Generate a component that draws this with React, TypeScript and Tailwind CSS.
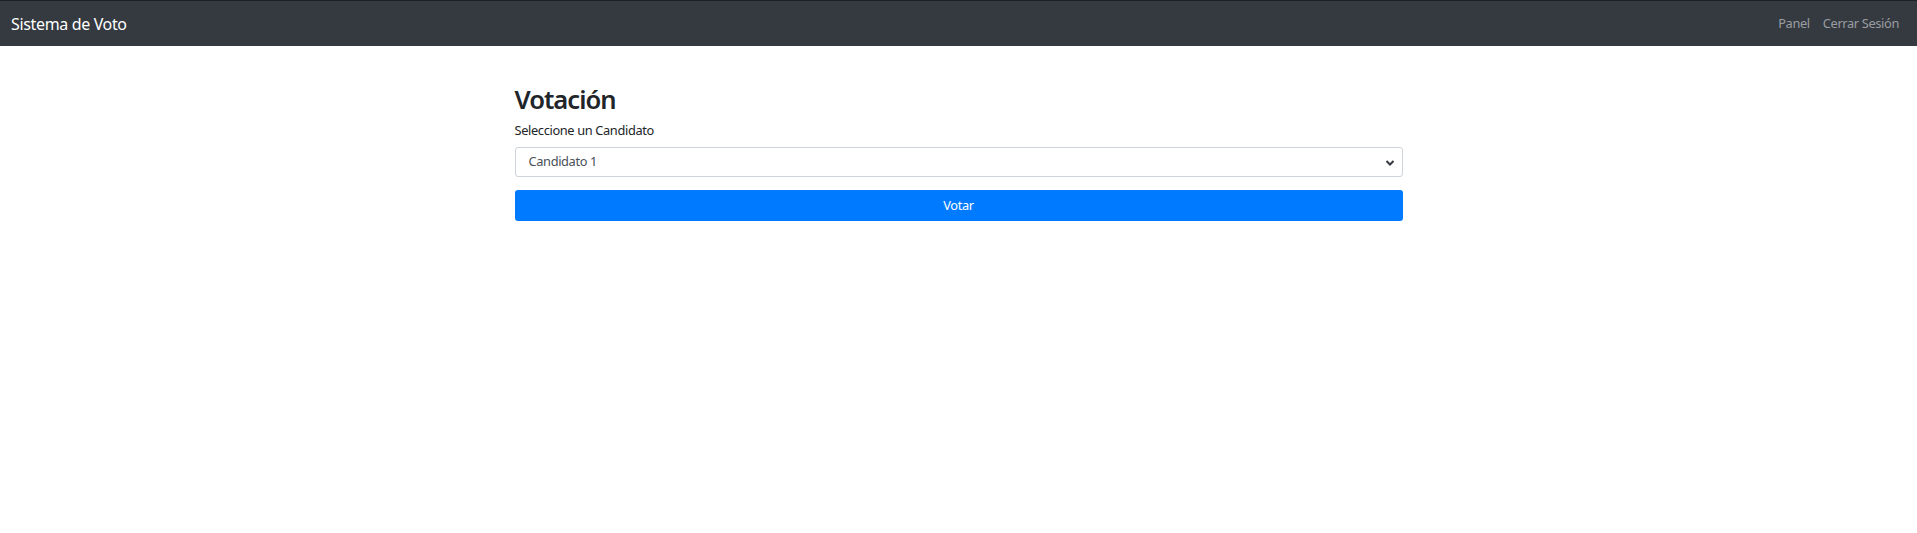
import React from "react";

const font = { fontFamily: '"Noto Sans", "Open Sans", Arial, sans-serif' };

export default function App() {
  return (
    <div className="min-h-screen bg-white text-[#212529] tracking-[-0.35px]" style={font}>
      <nav className="h-[46px] bg-[#343a40] border-t border-[#1e2124] flex items-center justify-between pl-[11px] pr-[18px]">
        <span className="text-[16px] text-white">Sistema de Voto</span>
        <div className="flex gap-[13px] text-[12.8px] text-[#9a9da0]">
          <a href="#">Panel</a>
          <a href="#">Cerrar Sesión</a>
        </div>
      </nav>

      <main className="w-[888px] mx-auto pt-[39px]">
        <h2 className="text-[25.6px] font-semibold leading-[1.2] mb-[5px] tracking-[-1px]">Votación</h2>
        <label className="block text-[12.8px] mb-[7px]">Seleccione un Candidato</label>
        <div className="relative h-[30px] border border-[#ced4da] rounded-[3px] flex items-center pl-[13px] text-[12.8px] text-[#495057]">
          Candidato 1
          <svg className="absolute right-[7px] top-[11px]" width="10" height="8" viewBox="0 0 10 8">
            <path d="M1.5 2 L5 5.5 L8.5 2" fill="none" stroke="#343a40" strokeWidth="2" />
          </svg>
        </div>
        <button className="mt-[13px] w-full h-[31px] bg-[#007bff] rounded-[3px] text-white text-[12.8px]">
          Votar
        </button>
      </main>
    </div>
  );
}
